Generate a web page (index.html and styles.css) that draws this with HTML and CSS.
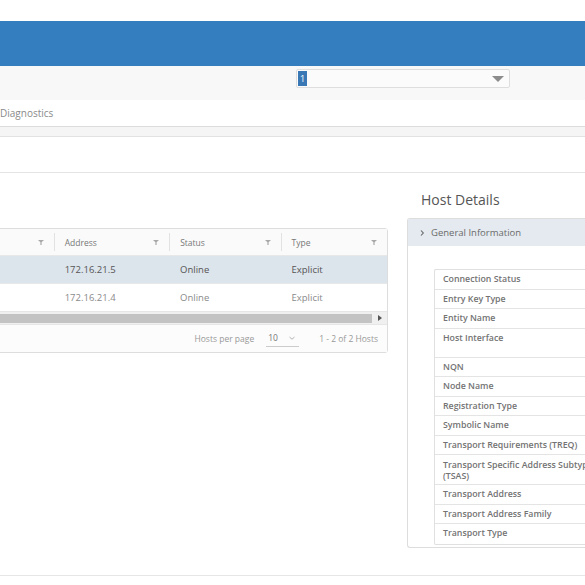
FILE: index.html
```html
<!DOCTYPE html>
<html lang="en">
<head>
  <meta charset="UTF-8" />
  <meta name="viewport" content="width=device-width, initial-scale=1.0"/>
  <title>Hosts | Diagnostics</title>
  <link rel="stylesheet" href="styles.css">
</head>
<body>
  <div class="page">
    <div class="top-strip"></div>
    <div class="header"></div>

    <div class="subnav">
      <div class="picker">
        <span class="picker-value">1</span>
        <span class="picker-caret"></span>
      </div>
    </div>

    <div class="tabs">
      <span class="tab">Diagnostics</span>
    </div>
    <div class="tabs-band"></div>
    <div class="toolbar"></div>

    <div class="content">
      <div class="left-col">
        <div class="grid">
          <div class="grid-row grid-head">
            <div class="cell c1"><span></span><svg class="filter" viewBox="0 0 8 8"><path d="M1 2h6L4.6 4.3V7H3.4V4.3z"/></svg></div>
            <div class="cell c2"><span>Address</span><svg class="filter" viewBox="0 0 8 8"><path d="M1 2h6L4.6 4.3V7H3.4V4.3z"/></svg></div>
            <div class="cell c3"><span>Status</span><svg class="filter" viewBox="0 0 8 8"><path d="M1 2h6L4.6 4.3V7H3.4V4.3z"/></svg></div>
            <div class="cell c4"><span>Type</span><svg class="filter" viewBox="0 0 8 8"><path d="M1 2h6L4.6 4.3V7H3.4V4.3z"/></svg></div>
          </div>
          <div class="grid-row selected">
            <div class="cell c1"></div>
            <div class="cell c2">172.16.21.5</div>
            <div class="cell c3">Online</div>
            <div class="cell c4">Explicit</div>
          </div>
          <div class="grid-row last">
            <div class="cell c1"></div>
            <div class="cell c2">172.16.21.4</div>
            <div class="cell c3">Online</div>
            <div class="cell c4">Explicit</div>
          </div>
          <div class="scrollbar">
            <div class="scroll-thumb"></div>
            <div class="scroll-arrow"></div>
          </div>
          <div class="grid-foot">
            <span>Hosts per page</span>
            <span class="page-size">10 <svg class="chev-down" viewBox="0 0 8 8"><path d="M1.5 3l2.5 2.2L6.5 3"/></svg></span>
            <span>1 - 2 of 2 Hosts</span>
          </div>
        </div>
      </div>

      <div class="right-col">
        <h3 class="details-title">Host Details</h3>
        <div class="panel">
          <div class="panel-head">
            <svg class="chev-right" viewBox="0 0 8 8"><path d="M3 1.5l2.3 2.5L3 6.5"/></svg>
            <span>General Information</span>
          </div>
          <div class="panel-body">
            <div class="kv">
              <div class="kv-row">Connection Status</div>
              <div class="kv-row">Entry Key Type</div>
              <div class="kv-row">Entity Name</div>
              <div class="kv-row tall">Host Interface</div>
              <div class="kv-row">NQN</div>
              <div class="kv-row">Node Name</div>
              <div class="kv-row">Registration Type</div>
              <div class="kv-row">Symbolic Name</div>
              <div class="kv-row">Transport Requirements (TREQ)</div>
              <div class="kv-row wrap">Transport Specific Address Subtype<br>(TSAS)</div>
              <div class="kv-row">Transport Address</div>
              <div class="kv-row">Transport Address Family</div>
              <div class="kv-row">Transport Type</div>
            </div>
          </div>
        </div>
      </div>
    </div>

    <div class="bottom-line"></div>
  </div>
</body>
</html>
```

FILE: styles.css
```css
body {
  margin: 0;
  padding: 0;
  font-family: "Open Sans", Arial, sans-serif;
  background: #ffffff;
  overflow: hidden;
}
.page {
  width: 585px;
  height: 585px;
  overflow: hidden;
}
.top-strip {
  height: 21px;
  background: #ffffff;
}
.header {
  height: 45px;
  background-color: #347dbe;
}
.subnav {
  height: 34px;
  background: #f8f8f8;
  padding-top: 3px;
  box-sizing: border-box;
}
.picker {
  margin-left: 296px;
  width: 214px;
  height: 19px;
  border: 1px solid #dedede;
  border-radius: 2px;
  background: #fbfbfb;
  box-sizing: border-box;
  display: flex;
  align-items: center;
  justify-content: space-between;
}
.picker-value {
  background: #3a78b5;
  color: #ffffff;
  font-size: 9px;
  line-height: 15px;
  padding: 0 2px;
  margin-left: 1px;
}
.picker-caret {
  width: 0;
  height: 0;
  border-left: 6px solid transparent;
  border-right: 6px solid transparent;
  border-top: 6px solid #8c8c8c;
  margin-right: 5px;
}
.tabs {
  height: 26px;
  border-bottom: 1px solid #dcdcdc;
  display: flex;
  align-items: center;
}
.tab {
  font-family: "Open Sans", sans-serif;
  font-size: 10px;
  color: #8a8a8a;
}
.tabs-band {
  height: 9px;
  background: #f5f5f5;
  border-bottom: 1px solid #e2e2e2;
}
.toolbar {
  height: 35px;
  border-bottom: 1px solid #e4e4e4;
}
.content {
  display: flex;
  align-items: flex-start;
}
.left-col {
  width: 400px;
  margin-left: -12px;
  padding-top: 55px;
  flex-shrink: 0;
}
.grid {
  border: 1px solid #dddddd;
  border-radius: 3px;
  font-family: "Open Sans", sans-serif;
}
.grid-row {
  display: flex;
  height: 28px;
  box-sizing: border-box;
  align-items: center;
  border-bottom: 1px solid #e8e8e8;
  font-size: 9.5px;
  color: #555555;
}
.grid-row.last {
  color: #8a8a8a;
  height: 27px;
  border-bottom: none;
}
.grid-head {
  height: 27px;
  font-size: 8.5px;
  color: #777777;
  background: #fafafa;
}
.selected {
  background: #dce4ec;
}
.cell {
  box-sizing: border-box;
  padding-left: 10px;
  height: 100%;
  display: flex;
  align-items: center;
}
.grid-head .cell {
  justify-content: space-between;
  padding-right: 9px;
  border-right: 1px solid #e2e2e2;
  height: 18px;
}
.grid-head .c4 {
  border-right: none;
}
.c1 { width: 66px; }
.c2 { width: 116px; }
.c3 { width: 112px; }
.c4 { width: 106px; }
.filter {
  width: 8px;
  height: 8px;
  fill: #a8a8a8;
}
.scrollbar {
  height: 14px;
  box-sizing: border-box;
  display: flex;
  align-items: center;
  background: #f0f0f0;
  border-top: 1px solid #e6e6e6;
  border-bottom: 1px solid #e6e6e6;
}
.scroll-thumb {
  flex: 1;
  height: 9px;
  background: #c3c3c3;
}
.scroll-arrow {
  width: 0;
  height: 0;
  border-top: 3px solid transparent;
  border-bottom: 3px solid transparent;
  border-left: 4px solid #555555;
  margin: 0 5px 0 6px;
}
.grid-foot {
  height: 27px;
  display: flex;
  align-items: center;
  justify-content: flex-end;
  gap: 12px;
  padding-right: 9px;
  font-size: 8.5px;
  color: #999999;
  background: #fcfcfc;
}
.page-size {
  display: flex;
  align-items: center;
  gap: 10px;
  width: 31px;
  padding: 2px 0 3px 2px;
  border-bottom: 1px solid #cccccc;
  color: #777777;
  margin-right: 8px;
}
.chev-down {
  width: 8px;
  height: 8px;
  fill: none;
  stroke: #aaaaaa;
  stroke-width: 0.9;
}
.right-col {
  margin-left: 19px;
  width: 200px;
  flex-shrink: 0;
}
.details-title {
  margin: 17px 0 0 14px;
  font-family: "Open Sans", sans-serif;
  font-weight: normal;
  font-size: 14px;
  color: #555555;
  line-height: 20px;
  height: 28px;
}
.panel {
  border: 1px solid #dddddd;
  border-right: none;
  border-radius: 3px 0 0 3px;
  height: 330px;
  box-sizing: border-box;
}
.panel-head {
  height: 27px;
  background: #e4eaf0;
  display: flex;
  align-items: center;
  gap: 5px;
  padding-left: 10px;
  font-size: 9.5px;
  color: #6b6b6b;
}
.chev-right {
  width: 8px;
  height: 8px;
  fill: none;
  stroke: #666666;
  stroke-width: 1.1;
}
.panel-body {
  padding: 23px 0 0 26px;
}
.kv {
  border: 1px solid #e0e0e0;
  border-right: none;
  border-radius: 2px 0 0 2px;
}
.kv-row {
  height: 19.5px;
  line-height: 19px;
  border-bottom: 1px solid #e4e4e4;
  box-sizing: border-box;
  padding-left: 8px;
  font-size: 8.8px;
  font-weight: 600;
  color: #737373;
  white-space: nowrap;
}
.kv-row:last-child {
  border-bottom: none;
}
.kv-row.tall {
  height: 29px;
}
.kv-row.wrap {
  height: 30px;
  line-height: 10.5px;
  padding-top: 5px;
}
.bottom-line {
  margin-top: 27px;
  border-top: 1px solid #e6e6e6;
}
```
